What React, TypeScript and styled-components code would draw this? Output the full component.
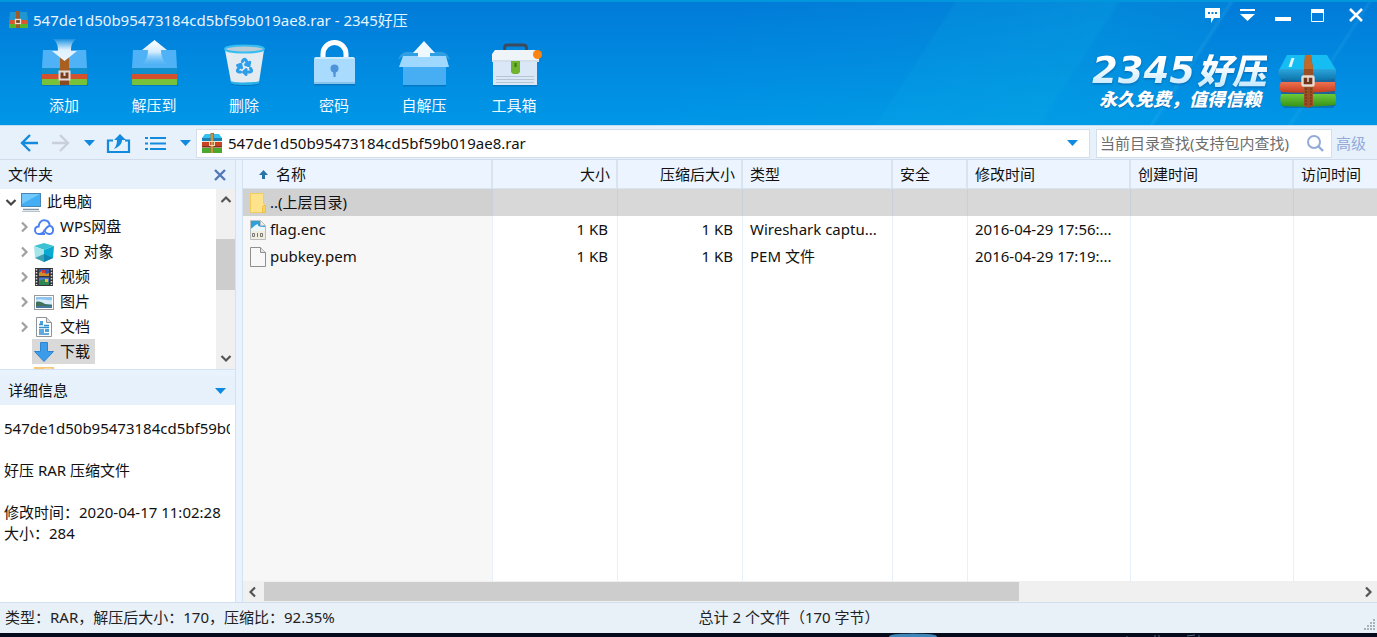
import React from "react";
import styled, { createGlobalStyle, css } from "styled-components";
import { Recycle } from "lucide-react";

const GlobalStyle = createGlobalStyle`
  *, *::before, *::after { box-sizing: border-box; }
  html, body, #root { height: 100%; margin: 0; }
  body {
    font: 15px/21px "Noto Sans", "Noto Sans CJK SC", sans-serif;
    color: #111;
    background: #050b1a;
  }
  button, input { font: inherit; color: inherit; }
  svg { display: block; flex: none; overflow: visible; }
`;

const Shell = styled.div`
  display: flex;
  flex-direction: column;
  min-height: 100%;
`;

const Header = styled.header`
  border-top: 2px solid #0297dc;
  color: #fff;
  background:
    linear-gradient(
      123deg,
      transparent 0 50%,
      rgba(10, 170, 225, 0.12) 65.500%,
      rgba(10, 175, 225, 0.24) 65.700%,
      rgba(10, 175, 225, 0.36) 76.600%,
      rgba(10, 175, 225, 0.22) 77%,
      rgba(10, 175, 225, 0.12) 84.300%,
      rgba(60, 190, 240, 0.22) 84.500%,
      transparent 84.800% 93.800%,
      rgba(60, 190, 240, 0.16) 94%,
      transparent 94.300%
    ),
    linear-gradient(#017bd8, #0097e7);
`;

const TitleBar = styled.div`
  display: flex;
  justify-content: space-between;
  height: 36px;
`;

const Title = styled.h1`
  display: flex;
  align-items: center;
  gap: 4px;
  margin: 0;
  padding-left: 9px;
  font-size: 15px;
  font-weight: 400;
  color: #e8f4ff;
`;

const PlainButton = styled.button`
  display: flex;
  align-items: center;
  justify-content: center;
  padding: 0;
  border: 0;
  background: none;
  cursor: pointer;
`;

const WindowButtons = styled.div`
  display: flex;
  height: 26px;
`;

const WindowButton = styled(PlainButton)<{ $wide?: boolean }>`
  width: ${(p) => (p.$wide ? 42 : 35)}px;
`;

const ToolRow = styled.div`
  display: flex;
  justify-content: space-between;
  height: 87px;
  padding: 0 40px 0 19px;
`;

const Tools = styled.nav`
  display: flex;
`;

const Tool = styled(PlainButton)`
  flex-direction: column;
  justify-content: flex-start;
  width: 90px;
  gap: 7px;
  color: #eef8ff;
`;

const Brand = styled.div`
  display: flex;
  gap: 12px;
  padding-top: 16px;
`;

const BrandText = styled.div`
  font-style: italic;
  font-weight: 900;
  white-space: nowrap;
`;

const BrandName = styled.div`
  display: flex;
  align-items: center;
  gap: 2px;
  height: 33px;
  font-size: 35px;
  line-height: 33px;
  background: linear-gradient(#fff 30%, #c4e8ff);
  -webkit-background-clip: text;
  background-clip: text;
  color: transparent;
  filter: drop-shadow(0 1px 1px #0866ac);
`;

const BrandDigits = styled.span`
  font-family: "DejaVu Sans", sans-serif;
  font-size: 37px;
`;

const Slogan = styled.div`
  padding-left: 7px;
  font-size: 18px;
  line-height: 24px;
  text-shadow: 0 1px 1px #0866ac;
`;

const NavBar = styled.div`
  display: flex;
  align-items: center;
  height: 35px;
  padding: 1px 11px 0 14px;
  background: #e7f1fb;
  border-top: 1px solid #c3def3;
  border-bottom: 1px solid #d0dcea;
`;

const NavButton = styled(PlainButton)<{ $w: number }>`
  width: ${(p) => p.$w}px;
  height: 28px;
`;

const Field = styled.label<{ $search?: boolean }>`
  display: flex;
  align-items: center;
  height: 29px;
  background: #fff;
  border: 1px solid #d5dfeb;
  ${(p) =>
    p.$search
      ? css`
          width: 236px;
          margin-left: 6px;
          padding: 0 7px 0 3px;
        `
      : css`
          flex: 1;
          gap: 6px;
          padding: 0 11px 0 5px;
        `}
`;

const TextInput = styled.input`
  flex: 1;
  min-width: 0;
  padding: 0;
  border: 0;
  outline: 0;
  background: none;
  &::placeholder { color: #6d6d6d; opacity: 1; }
`;

const Advanced = styled.a`
  margin-left: 4px;
  color: #93a9d8;
  text-decoration: none;
`;

const Body = styled.main`
  flex: 1;
  display: grid;
  grid-template-columns: 236px 1fr;
  column-gap: 6px;
  background: #e9f3fd;
`;

const Side = styled.aside`
  display: flex;
  flex-direction: column;
  min-width: 0;
  border-right: 1px solid #d3e1f1;
`;

const PanelHead = styled.div`
  display: flex;
  align-items: center;
  justify-content: space-between;
  height: 29px;
  padding: 0 9px 0 8px;
  background: #e7f1fb;
`;

const PanelTitle = styled.h2`
  margin: 0;
  font-size: 15px;
  font-weight: 400;
`;

const TreePane = styled.div`
  display: flex;
  height: 181px;
  margin-bottom: 6px;
  overflow: hidden;
  background: #fff;
  border-bottom: 1px solid #d3e1f1;
`;

const Tree = styled.ul`
  flex: 1;
  margin: 0;
  padding: 0;
  list-style: none;
`;

const TreeRow = styled.li<{ $root?: boolean }>`
  display: flex;
  align-items: center;
  height: 25px;
  padding-left: ${(p) => (p.$root ? 5 : 18)}px;
`;

const Twisty = styled.span`
  width: 14px;
`;

const TreeLabel = styled.span<{ $selected?: boolean }>`
  display: flex;
  align-items: center;
  gap: 6px;
  height: 25px;
  padding: 0 5px 0 2px;
  background: ${(p) => (p.$selected ? "#d9d9d9" : "none")};
`;

const VScroll = styled.div`
  display: flex;
  flex-direction: column;
  align-items: center;
  justify-content: space-between;
  width: 19px;
  background: #f0f0f0;
`;

const VThumb = styled.div`
  width: 19px;
  height: 51px;
  margin: 28px 0 auto;
  background: #cdcdcd;
`;

const ScrollButton = styled(PlainButton)`
  width: 19px;
  height: 22px;
`;

const Details = styled.div`
  flex: 1;
  padding: 13px 5px 0 4px;
  background: #fff;
`;

const DetailLine = styled.p`
  margin: 0;
  min-height: 21px;
  overflow: hidden;
  white-space: nowrap;
`;

const List = styled.section`
  display: flex;
  flex-direction: column;
  min-width: 0;
  background: #fff;
  border-left: 1px solid #d3e1f1;
`;

const Files = styled.table`
  flex: 1;
  width: 100%;
  table-layout: fixed;
  border-collapse: separate;
  border-spacing: 0;
`;

const Col = styled.col<{ $w?: number }>`
  width: ${(p) => (p.$w ? `${p.$w}px` : "auto")};
`;

const Th = styled.th<{ $right?: boolean }>`
  height: 29px;
  padding: 0 6px 0 7px;
  font-weight: 400;
  white-space: nowrap;
  text-align: ${(p) => (p.$right ? "right" : "left")};
  background: #ecf5ff;
  border-right: 2px solid #dae4ef;
  border-bottom: 1px solid #dae4ef;
  &:last-child { border-right: 0; }
`;

const SortLabel = styled.span`
  display: flex;
  align-items: center;
  gap: 8px;
  padding-left: 9px;
`;

const Tr = styled.tr<{ $selected?: boolean }>`
  height: 27px;
  background: ${(p) => (p.$selected ? "#d8d8d8" : "#fff")};
  td:first-child { background: ${(p) => (p.$selected ? "#d1d1d1" : "#f7f7f7")}; }
  td { border-color: ${(p) => (p.$selected ? "#c5d0da" : "#e6f0fb")}; }
`;

const Td = styled.td<{ $right?: boolean }>`
  padding: 0 9px 0 7px;
  overflow: hidden;
  white-space: nowrap;
  text-overflow: ellipsis;
  text-align: ${(p) => (p.$right ? "right" : "left")};
  border-right: 1px solid;
  &:last-child { border-right: 0; }
`;

const FileName = styled.span`
  display: flex;
  align-items: center;
  gap: 4px;
`;

const HScroll = styled.div`
  display: flex;
  align-items: center;
  height: 21px;
  background: #f0f0f0;
`;

const HTrack = styled.div`
  flex: 1;
  padding-left: 2px;
`;

const HThumb = styled.div`
  width: 69%;
  height: 19px;
  background: #cdcdcd;
`;

const StatusBar = styled.footer`
  display: grid;
  grid-template-columns: 1fr 1fr;
  column-gap: 18px;
  align-items: center;
  position: relative;
  height: 31px;
  padding: 0 3px 2px 5px;
  color: #222;
  background: #e8f0f8;
  border-top: 1px solid #d3deed;
`;

const Grip = styled.div`
  position: absolute;
  right: 2px;
  bottom: 3px;
`;

const Backdrop = styled.div`
  display: flex;
  justify-content: flex-end;
  height: 4px;
  padding-right: 177px;
  overflow: hidden;
`;

const svgBox = (w: number, h: number = w) => ({ width: w, height: h, viewBox: `0 0 ${w} ${h}` });

const Caret = () => (
  <svg {...svgBox(11, 6)}><path d="M0 0h11L5.5 6z" fill="#0f8ade" /></svg>
);

const Chevron = ({ dir, color = "#555" }: { dir: "up" | "down" | "left" | "right"; color?: string }) => {
  const paths = {
    up: "M1.5 8 6 3.5 10.500 8",
    down: "M1.500 4 6 8.500 10.500 4",
    left: "M8 1.500 3.500 6 8 10.500",
    right: "M4 1.500 8.500 6 4 10.500",
  };
  return <svg {...svgBox(12)}><path d={paths[dir]} fill="none" stroke={color} strokeWidth="2.200" /></svg>;
};

const BoxBase = () => (
  <>
    <path d="M2 46h47v2H3z" fill="#0667ad" opacity=".6" />
    <path d="M4 12h43l1 18H3z" fill="#4fb2f6" />
    <path d="M3 30h45v6H3z" fill="#118fcd" />
    <path d="M3 36h45v5.500H3z" fill="#d4512e" />
    <path d="M3 41h45v6H3z" fill="#78c13a" />
  </>
);

const AddIcon = () => (
  <svg {...svgBox(50)}>
    <defs>
      <linearGradient id="fadeDown" x2="0" y2="1">
        <stop offset="0" stopColor="#fff" stopOpacity=".1" />
        <stop offset=".5" stopColor="#dff1ff" />
        <stop offset="1" stopColor="#e8f5ff" />
      </linearGradient>
    </defs>
    <BoxBase />
    <path d="M21 14h9v33h-9z" fill="#a95f1f" />
    <path d="M21 36h9v11h-9z" fill="#8b4a24" />
    <rect x="20.500" y="33.500" width="10" height="8" fill="#7a3d1c" stroke="#e3dcd6" strokeWidth="2" />
    <path d="M25.500 33v5" stroke="#e3dcd6" strokeWidth="2" />
    <path d="M14 1h23c-4 3-5 7-5 12h6L25.500 23 13 13h6c0-5-1-9-5-12z" fill="url(#fadeDown)" />
  </svg>
);

const ExtractIcon = () => (
  <svg {...svgBox(50)}>
    <defs>
      <linearGradient id="fadeUp" x2="0" y2="1">
        <stop offset="0" stopColor="#fff" />
        <stop offset=".5" stopColor="#d3ecff" />
        <stop offset="1" stopColor="#7cc6f8" stopOpacity=".1" />
      </linearGradient>
    </defs>
    <BoxBase />
    <path d="M25.500 2 38 12h-6c0 6 2 11 6 14H13c4-3 6-8 6-14h-6z" fill="url(#fadeUp)" />
  </svg>
);

const TrashIcon = () => (
  <svg {...svgBox(50)}>
    <ellipse cx="26" cy="46" rx="14" ry="2" fill="#0667ad" opacity=".6" />
    <path d="M6 12h39l-5 32c-1 3-27 3-28 0z" fill="#e3ebf1" />
    <path d="M12 43c3 2 25 2 28 0l-.5 2.500c-3 2-24 2-27 0z" fill="#28b0e8" />
    <ellipse cx="25.500" cy="11" rx="19.500" ry="3.500" fill="#bccbd4" stroke="#36bdf2" strokeWidth="2" />
    <Recycle x={16} y={19} width={19} height={19} color="#2d9eea" strokeWidth={3.8} />
  </svg>
);

const LockIcon = () => (
  <svg {...svgBox(50)}>
    <path d="M5 45h41v2.500H5z" fill="#0667ad" opacity=".6" />
    <path d="M14 20v-4a11.500 11.500 0 0 1 23 0v4" fill="none" stroke="#fff" strokeWidth="5" />
    <rect x="5" y="19" width="41" height="27" rx="2" fill="#a9dbff" />
    <path d="M5 44h41v2H5z" fill="#86c4ee" />
    <path d="M7 19h37l2 2H5z" fill="#cdeaff" />
    <circle cx="25.500" cy="30.500" r="4" fill="#4f93db" />
    <path d="M24 32h3l-.5 7h-2z" fill="#4f93db" />
  </svg>
);

const SfxIcon = () => (
  <svg {...svgBox(50)}>
    <path d="M4 46h43v2.500H4z" fill="#0667ad" opacity=".6" />
    <path d="M-1 22c2-7 7-9 14-8h24c7-1 12 1 14 8l-5-4H4z" fill="#2e9fe4" />
    <path d="M4 29h43v18H4z" fill="#47aef3" />
    <path d="M4 18h43l3 11H0z" fill="#9fd8ff" />
    <path d="M25 3l11 12h-5v4H19v-4h-5z" fill="#eef8ff" />
  </svg>
);

const ToolboxIcon = () => (
  <svg {...svgBox(50)}>
    <path d="M4 46h44v2.500H4z" fill="#0667ad" opacity=".6" />
    <path d="M15.500 13v-3c0-2 1-3 3-3h16c2 0 3 1 3 3v3" fill="none" stroke="#3c4a5c" strokeWidth="2.800" />
    <path d="M4 22h44v25H4z" fill="#d9e7f6" />
    <path d="M6 12h40l4 4v8H3v-8z" fill="#eff4f9" />
    <path d="M3 23h47" stroke="#b8cbdd" />
    <path d="M7 38.500h38M7 41.500h38M7 44.500h38" stroke="#b7c5d3" />
    <path d="M22 23h9v11l-2 2h-5l-2-2z" fill="#6fb42b" />
    <path d="M26.500 25v4" stroke="#3c7617" strokeWidth="2" />
    <circle cx="48.500" cy="16.500" r="4.500" fill="#f98412" />
  </svg>
);

const TitleIcon = () => (
  <svg {...svgBox(20, 18)}>
    <path d="M1 1h17l1 8H0z" fill="#2196cf" />
    <path d="M0 9h19v5H0z" fill="#d8572f" />
    <path d="M0 13h19v4H0z" fill="#54b52d" />
    <path d="M7 0h4v17H7z" fill="#9c5c29" />
    <rect x="6.500" y="8.500" width="5" height="4" fill="#75411f" stroke="#eee1d4" strokeWidth="1.300" />
  </svg>
);

const ArchiveIcon = () => (
  <svg {...svgBox(20)}>
    <path d="M3 1h14l3 4v2H0V5z" fill="#34c1ef" />
    <path d="M0 5h20v3H0z" fill="#1a83b5" />
    <path d="M1 8h18v2H1zM1 14h18v1H1z" fill="#e8e4d4" />
    <path d="M0 9h20v4H0z" fill="#cc4024" />
    <path d="M0 15h20v5H0z" fill="#4aa82a" />
    <path d="M0 13h20v1.500H0z" fill="#823019" />
    <path d="M8.500 0h3.500v20H8.500z" fill="#a8712f" />
    <path d="M10 1v19" stroke="#e5ba67" />
    <rect x="7.500" y="8.500" width="5" height="4" fill="none" stroke="#f2dfb5" />
  </svg>
);

const BrandIcon = () => (
  <svg {...svgBox(58, 55)}>
    <defs>
      <linearGradient id="spineRed" x2="0" y2="1"><stop stopColor="#f0714e" /><stop offset="1" stopColor="#c23c1f" /></linearGradient>
      <linearGradient id="spineGreen" x2="0" y2="1"><stop stopColor="#6cca3a" /><stop offset="1" stopColor="#369218" /></linearGradient>
      <linearGradient id="spineBlue" x2="0" y2="1"><stop stopColor="#2ba6dd" /><stop offset="1" stopColor="#0c74ab" /></linearGradient>
    </defs>
    <path d="M2 50h55l-3 4H5z" fill="#075a97" opacity=".5" />
    <path d="M2 24h54v28H2z" fill="#1c669c" />
    <path d="M8 1h40l9 15H0z" fill="#16bdf3" />
    <path d="M0 15h57v10c-18 2-38 2-56 0-2-3-2-7-1-10z" fill="url(#spineBlue)" />
    <path d="M2 28h54v9c-18 2-36 2-54 1-2-3-2-7 0-10z" fill="url(#spineRed)" />
    <path d="M2 40h54c2 4 1 7 0 11-18 2-36 2-53 1-2-3-2-8-1-12z" fill="url(#spineGreen)" />
    <path d="M26 1h6l2 14v37l-5 2-4-2V15z" fill="#9a4f25" />
    <path d="M26 1h6l2 14H25z" fill="#c06b2a" />
    <path d="M27 34v18M32 34v18" stroke="#6c2e17" strokeDasharray="2 1" />
    <rect x="23.500" y="22.500" width="11" height="9" rx="1" fill="#6d331b" stroke="#e9ddd3" strokeWidth="2.400" />
    <path d="M29 22v6" stroke="#e9ddd3" strokeWidth="1.500" />
    <path d="M12.500 4h3l-3 9H9.500z" fill="#e2f8ff" />
  </svg>
);

const PcIcon = () => (
  <svg {...svgBox(20)}>
    <rect x=".5" y="1.500" width="19" height="13" fill="#43aef4" stroke="#4a86b5" />
    <path d="M1 2h18L1 12z" fill="#70c8fb" />
    <path d="M2 17.500h16" stroke="#8396a6" strokeWidth="1.500" /><path d="M1 19.500h18" stroke="#b9c5ce" />
  </svg>
);

const CloudIcon = () => (
  <svg {...svgBox(20)}>
    <path
      d="M11 17H5C2.500 17 1 15.300 1 13.200 1 11 2.600 9.500 4.700 9.500 4.700 6 7 3.300 10.200 3.300c3.200 0 5.300 2.300 5.600 5.600 2 .3 3.300 1.900 3.300 4 0 2.400-1.700 4.100-4 4.100-3.200 0-4.200-2.200-5-4.500"
      fill="none"
      stroke="#4a80f0"
      strokeWidth="1.900"
    />
    <path d="M15.500 9c-4.500.3-4.500 7.500-9 7.800" fill="none" stroke="#4a80f0" strokeWidth="1.900" />
  </svg>
);

const CubeIcon = () => (
  <svg {...svgBox(20)}>
    <path d="M0 4 10 1l10 3-10 4z" fill="#3cc3d3" />
    <path d="M0 4l10 4v12L1 16z" fill="#a5e4e9" />
    <path d="M20 4 10 8v12l9-4z" fill="#0aa9d2" />
    <path d="M1 16l9-4v8z" fill="#3f9fb2" />
    <path d="M10 12l9 4-9 4z" fill="#0a86b4" />
  </svg>
);

const VideoIcon = () => (
  <svg {...svgBox(20)}>
    <path d="M1 1h18v18H1z" fill="#33363b" />
    <path d="M2.500 2v16M17.500 2v16" stroke="#d5d5d5" strokeWidth="1.500" strokeDasharray="1.500 1.500" />
    <path d="M5 2h10v7H5z" fill="#3459b3" /><path d="M5 10.500h10V18H5z" fill="#4d7cd2" />
    <path d="M5 6l4-3 3 4 3-1v3H5z" fill="#d18a2c" /><path d="M8 3h3v3H8z" fill="#d8372b" />
    <path d="M5 14l5-2 5 3v3H5z" fill="#2e8752" /><path d="M11 12h3v3h-3z" fill="#efbd35" />
  </svg>
);

const PictureIcon = () => (
  <svg {...svgBox(20)}>
    <rect x=".5" y="3.500" width="19" height="14" fill="#fff" stroke="#9a9a9a" />
    <path d="M2 5h16v11H2z" fill="#8ec4f0" /><path d="M2 8c6-2 10 1 16 0v4H2z" fill="#d8ecf9" />
    <path d="M2 10c3-1 6 0 9 2l7 1v2H2z" fill="#40725c" /><path d="M2 14h16v2H2z" fill="#47779f" />
  </svg>
);

const DocumentIcon = () => (
  <svg {...svgBox(20)}>
    <path d="M2.500.5h10l5 5v14h-15z" fill="#fff" stroke="#8d9599" />
    <path d="M12.500.5v5h5" fill="#e0e0e0" stroke="#8d9599" />
    <path d="M5 7.500h4M10 8.500h5M5 10.500h10M5 13h5M5 15h5M5 17h10" stroke="#2f8fcf" strokeWidth="1.300" />
    <path d="M11 12h4v3h-4zM6 4h3v3H6z" fill="#4aa3dd" />
  </svg>
);

const DownloadIcon = () => (
  <svg {...svgBox(20)}><path d="M6.500.5h7v9h6L10 19.500.5 9.500h6z" fill="#3c9cea" stroke="#2b85d3" /></svg>
);

const FolderIcon = () => (
  <svg {...svgBox(16, 20)}>
    <path d="M.5.5h13v10l2 2v7H.5z" fill="#ffe38c" stroke="#f2cd5c" />
    <path d="M13.500 12.500h2v7h-3v-5z" fill="#fbd45f" stroke="#edbf42" />
  </svg>
);

const TreeFolderIcon = () => (
  <svg {...svgBox(20)}><path d="M0 0h20v6H0z" fill="#f5c878" /><path d="M10 1.500h8v3h-8z" fill="#fdeac6" /><path d="M0 5h20v13H0z" fill="#fbd994" /></svg>
);

const CaptureIcon = () => (
  <svg {...svgBox(16, 20)}>
    <path d="M.5.5h10l5 5v14H.5z" fill="#f1eedd" stroke="#b9bfc0" />
    <path d="M1 1h9.500l4.500 4.500V11H1z" fill="#329fd7" />
    <path d="M1 11V8.500C3 8.500 4 5 8 4c-1 3 3 3 7 3v4z" fill="#ecf7fc" />
    <path d="M10.500.5v5h5z" fill="#eee" stroke="#b9bfc0" />
    <path d="M2.500 13.500h2v3h-2zM7.500 13v4M10.500 13.500h2v3h-2z" fill="none" stroke="#777" />
  </svg>
);

const FileIcon = () => (
  <svg {...svgBox(16, 20)}>
    <path d="M.5.5h10l5 5v14H.5z" fill="#f8f8f8" stroke="#8f8f8f" /><path d="M10.500.5v5h5" fill="#e4e4e4" stroke="#8f8f8f" />
  </svg>
);

const tools = [
  { label: "添加", icon: <AddIcon /> },
  { label: "解压到", icon: <ExtractIcon /> },
  { label: "删除", icon: <TrashIcon /> },
  { label: "密码", icon: <LockIcon /> },
  { label: "自解压", icon: <SfxIcon /> },
  { label: "工具箱", icon: <ToolboxIcon /> },
];

const places = [
  { label: "WPS网盘", icon: <CloudIcon />, open: true },
  { label: "3D 对象", icon: <CubeIcon />, open: true },
  { label: "视频", icon: <VideoIcon />, open: true },
  { label: "图片", icon: <PictureIcon />, open: true },
  { label: "文档", icon: <DocumentIcon />, open: true },
  { label: "下载", icon: <DownloadIcon />, selected: true },
  { label: "", icon: <TreeFolderIcon /> },
];

const files = [
  { name: "..(上层目录)", icon: <FolderIcon />, size: "", packed: "", type: "", modified: "", selected: true },
  { name: "flag.enc", icon: <CaptureIcon />, size: "1 KB", packed: "1 KB", type: "Wireshark captu...", modified: "2016-04-29 17:56:..." },
  { name: "pubkey.pem", icon: <FileIcon />, size: "1 KB", packed: "1 KB", type: "PEM 文件", modified: "2016-04-29 17:19:..." },
];

const archive = "547de1d50b95473184cd5bf59b019ae8.rar";

export default function App() {
  return (
    <>
      <GlobalStyle />
      <Shell>
        <Header>
          <TitleBar>
            <Title><TitleIcon />{archive} - 2345好压</Title>
            <WindowButtons>
              <WindowButton aria-label="反馈">
                <svg {...svgBox(17, 15)}>
                  <path d="M1 0h15v10H10l-3 5v-5H1z" fill="#fff" />
                  <path d="M4 4h2v2H4zM7.500 4h2v2h-2zM11 4h2v2h-2z" fill="#0a7fd5" />
                </svg>
              </WindowButton>
              <WindowButton aria-label="菜单">
                <svg {...svgBox(15, 13)}><path d="M0 0h15v2H0zM0 5h15l-7.500 7z" fill="#fff" /></svg>
              </WindowButton>
              <WindowButton aria-label="最小化">
                <svg {...svgBox(16, 14)}><path d="M0 9h16v4H0z" fill="#fff" /></svg>
              </WindowButton>
              <WindowButton aria-label="最大化">
                <svg {...svgBox(13, 13)}><path d="M.5.5h12v12H.5z" fill="none" stroke="#fff" /><path d="M0 0h13v4H0z" fill="#fff" /></svg>
              </WindowButton>
              <WindowButton $wide aria-label="关闭">
                <svg {...svgBox(14, 14)}><path d="M1 1l12 12M13 1 1 13" stroke="#fff" strokeWidth="2.500" /></svg>
              </WindowButton>
            </WindowButtons>
          </TitleBar>
          <ToolRow>
            <Tools>
              {tools.map((t) => (
                <Tool key={t.label}>{t.icon}<span>{t.label}</span></Tool>
              ))}
            </Tools>
            <Brand>
              <BrandText>
                <BrandName><BrandDigits>2345</BrandDigits>好压</BrandName>
                <Slogan>永久免费，值得信赖</Slogan>
              </BrandText>
              <BrandIcon />
            </Brand>
          </ToolRow>
        </Header>

        <NavBar>
          <NavButton $w={30} aria-label="后退">
            <svg {...svgBox(18)}><path d="M18 9H2M10 1 2 9l8 8" fill="none" stroke="#128bdf" strokeWidth="2.400" /></svg>
          </NavButton>
          <NavButton $w={34} aria-label="前进">
            <svg {...svgBox(18)}><path d="M0 9h16M8 1l8 8-8 8" fill="none" stroke="#c9cfdb" strokeWidth="2.400" /></svg>
          </NavButton>
          <NavButton $w={22} aria-label="历史记录"><Caret /></NavButton>
          <NavButton $w={36} aria-label="上一级">
            <svg {...svgBox(23, 19)}>
              <path d="M6 6.500H1V18h21V6.500h-4" fill="none" stroke="#128bdf" strokeWidth="2.200" />
              <path d="M13 0l6 6h-4c0 4-3 7-8 9 2-3 3-5 3-9H7z" fill="#128bdf" />
            </svg>
          </NavButton>
          <NavButton $w={38} aria-label="视图">
            <svg {...svgBox(21, 13)}><path d="M0 1h3M5 1h16M0 6.500h3M5 6.500h16M0 12h3M5 12h16" stroke="#128bdf" strokeWidth="2" /></svg>
          </NavButton>
          <NavButton $w={22} aria-label="视图选项"><Caret /></NavButton>
          <Field>
            <ArchiveIcon />
            <TextInput aria-label="地址" defaultValue={archive} />
            <PlainButton aria-label="展开地址"><Caret /></PlainButton>
          </Field>
          <Field $search>
            <TextInput aria-label="查找" placeholder="当前目录查找(支持包内查找)" />
            <PlainButton aria-label="搜索">
              <svg {...svgBox(17)}><circle cx="7" cy="7" r="6" fill="none" stroke="#93abd9" strokeWidth="2" /><path d="M11 11l5 5" stroke="#93abd9" strokeWidth="2.400" /></svg>
            </PlainButton>
          </Field>
          <Advanced href="#">高级</Advanced>
        </NavBar>

        <Body>
          <Side>
            <PanelHead>
              <PanelTitle>文件夹</PanelTitle>
              <PlainButton aria-label="关闭文件夹">
                <svg {...svgBox(12)}><path d="M1 1l10 10M11 1 1 11" stroke="#5279b5" strokeWidth="2.400" /></svg>
              </PlainButton>
            </PanelHead>
            <TreePane>
              <Tree>
                <TreeRow $root>
                  <Twisty><Chevron dir="down" color="#444" /></Twisty>
                  <TreeLabel><PcIcon />此电脑</TreeLabel>
                </TreeRow>
                {places.map((p, i) => (
                  <TreeRow key={i}>
                    <Twisty>{p.open && <Chevron dir="right" color="#a0a0a0" />}</Twisty>
                    <TreeLabel $selected={p.selected}>{p.icon}{p.label}</TreeLabel>
                  </TreeRow>
                ))}
              </Tree>
              <VScroll>
                <ScrollButton aria-label="向上滚动"><Chevron dir="up" /></ScrollButton>
                <VThumb />
                <ScrollButton aria-label="向下滚动"><Chevron dir="down" /></ScrollButton>
              </VScroll>
            </TreePane>
            <PanelHead>
              <PanelTitle>详细信息</PanelTitle>
              <PlainButton aria-label="折叠详细信息"><Caret /></PlainButton>
            </PanelHead>
            <Details>
              <DetailLine>{archive}</DetailLine>
              <DetailLine />
              <DetailLine>好压 RAR 压缩文件</DetailLine>
              <DetailLine />
              <DetailLine>修改时间：2020-04-17 11:02:28</DetailLine>
              <DetailLine>大小：284</DetailLine>
            </Details>
          </Side>

          <List>
            <Files>
              <colgroup>
                <Col $w={250} /><Col $w={125} /><Col $w={125} /><Col $w={150} />
                <Col $w={75} /><Col $w={163} /><Col $w={163} /><Col />
              </colgroup>
              <thead>
                <tr>
                  <Th>
                    <SortLabel>
                      <svg {...svgBox(9)}><path d="M4.500 0 9 5H6v4H3V5H0z" fill="#2775a8" /></svg>
                      名称
                    </SortLabel>
                  </Th>
                  <Th $right>大小</Th>
                  <Th $right>压缩后大小</Th>
                  <Th>类型</Th>
                  <Th>安全</Th>
                  <Th>修改时间</Th>
                  <Th>创建时间</Th>
                  <Th>访问时间</Th>
                </tr>
              </thead>
              <tbody>
                {files.map((f) => (
                  <Tr key={f.name} $selected={f.selected}>
                    <Td><FileName>{f.icon}{f.name}</FileName></Td>
                    <Td $right>{f.size}</Td>
                    <Td $right>{f.packed}</Td>
                    <Td>{f.type}</Td>
                    <Td />
                    <Td>{f.modified}</Td>
                    <Td />
                    <Td />
                  </Tr>
                ))}
                <Tr style={{ height: "auto" }} aria-hidden="true">
                  <Td /><Td /><Td /><Td /><Td /><Td /><Td /><Td />
                </Tr>
              </tbody>
            </Files>
            <HScroll>
              <ScrollButton aria-label="向左滚动"><Chevron dir="left" /></ScrollButton>
              <HTrack><HThumb /></HTrack>
              <ScrollButton aria-label="向右滚动"><Chevron dir="right" /></ScrollButton>
            </HScroll>
          </List>
        </Body>

        <StatusBar>
          <span>类型：RAR，解压后大小：170，压缩比：92.35%</span>
          <span>总计 2 个文件（170 字节）</span>
          <Grip>
            <svg {...svgBox(12)}>
              <path d="M1 11h11M4 8h8M7 5h5M10 2h2" stroke="#a9b1bb" strokeWidth="2" strokeDasharray="2 1" />
            </svg>
          </Grip>
        </StatusBar>
        <Backdrop>
          <svg {...svgBox(311, 4)}>
            <path d="M0 4C0 1 8 1 24 .5 40 1 48 1 48 4z" fill="#3f86b8" />
            <path d="M238 3v1M266 2v2M270 2v2M298 3l8-1M310 2v2" stroke="#4d6c86" />
          </svg>
        </Backdrop>
      </Shell>
    </>
  );
}
